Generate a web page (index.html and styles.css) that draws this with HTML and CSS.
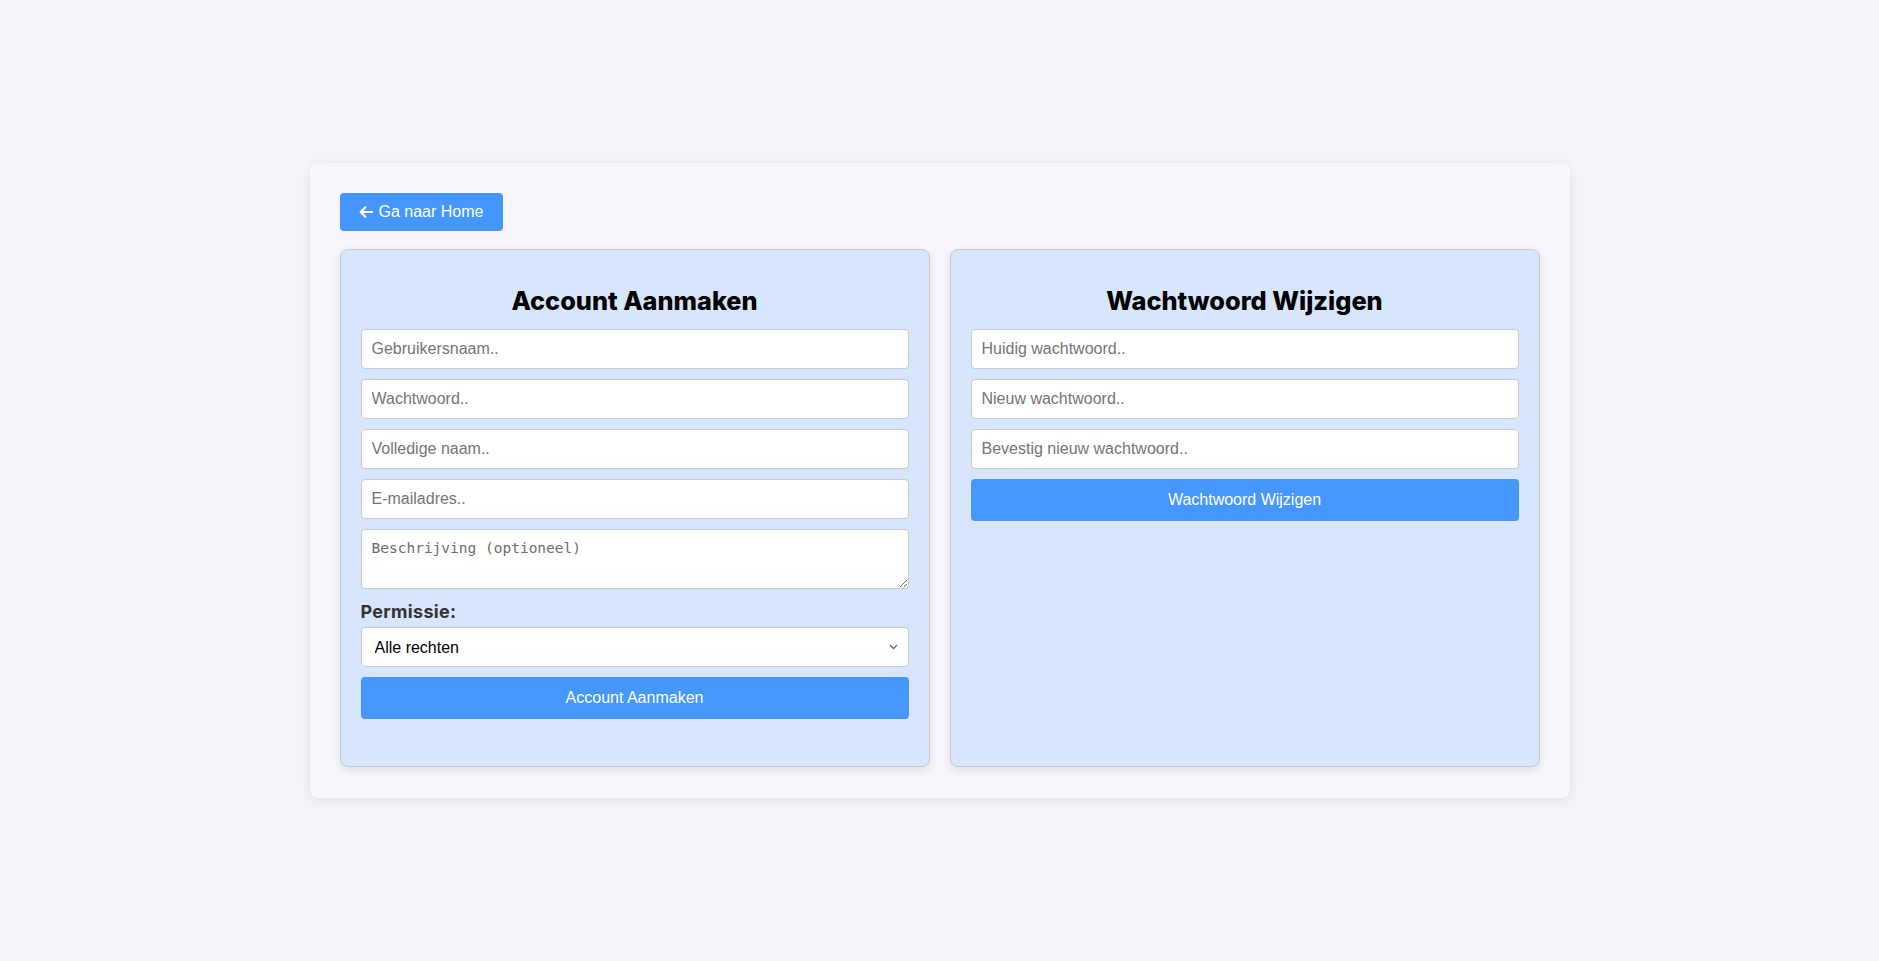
FILE: index.html
```html
<!DOCTYPE html>
<html lang="nl">
<head>
<meta charset="utf-8">
<title>Accountbeheer</title>
<link rel="stylesheet" href="styles.css">
</head>
<body>
<div class="container">
  <div class="top">
    <a class="home-btn" href="#">
      <svg class="arrow" width="14" height="12" viewBox="0 0 14 12" aria-hidden="true"><path d="M13.2 6H1.6M6.4 1.2L1.6 6l4.8 4.8" fill="none" stroke="#fff" stroke-width="2" stroke-linecap="round" stroke-linejoin="round"/></svg>
      <span>Ga naar Home</span>
    </a>
  </div>
  <div class="grid">
    <div class="card card-left">
      <h2>Account Aanmaken</h2>
      <form class="form">
        <input class="field" type="text" placeholder="Gebruikersnaam..">
        <input class="field" type="password" placeholder="Wachtwoord..">
        <input class="field" type="text" placeholder="Volledige naam..">
        <input class="field" type="email" placeholder="E-mailadres..">
        <textarea class="area" placeholder="Beschrijving (optioneel)"></textarea>
        <label class="label">Permissie:</label>
        <div class="select-wrap">
          <select class="select">
            <option>Alle rechten</option>
          </select>
          <svg class="chev" width="9" height="6" viewBox="0 0 9 6" aria-hidden="true"><path d="M1 1l3.5 3.5L8 1" fill="none" stroke="#6b6b6b" stroke-width="1.4"/></svg>
        </div>
        <button class="submit" type="button">Account Aanmaken</button>
      </form>
    </div>
    <div class="card">
      <h2>Wachtwoord Wijzigen</h2>
      <form class="form">
        <input class="field" type="password" placeholder="Huidig wachtwoord..">
        <input class="field" type="password" placeholder="Nieuw wachtwoord..">
        <input class="field" type="password" placeholder="Bevestig nieuw wachtwoord..">
        <button class="submit" type="button">Wachtwoord Wijzigen</button>
      </form>
    </div>
  </div>
</div>
</body>
</html>
```
FILE: styles.css
```css
* { box-sizing: border-box; }
html, body { margin: 0; padding: 0; }
body {
  background: #f3f3f8;
  font-family: "Liberation Sans", Arial, sans-serif;
  min-height: 100vh;
  display: flex;
  align-items: center;
  justify-content: center;
}
.container {
  width: 1260px;
  background: #f8f6fd;
  border-radius: 8px;
  padding: 30px 30px 31px;
  box-shadow: 0 2px 10px rgba(0,0,0,0.08);
}
.top {
  display: flex;
  margin-bottom: 18px;
}
.home-btn {
  display: flex;
  align-items: center;
  gap: 6px;
  height: 38px;
  padding: 0 20px 0 19px;
  background: #4597fe;
  color: #fff;
  border-radius: 4px;
  text-decoration: none;
  font-size: 16px;
}
.grid {
  display: grid;
  grid-template-columns: 1fr 1fr;
  gap: 20px;
}
.card {
  background: #d7e6fd;
  border: 1px solid #c6c9cf;
  border-radius: 8px;
  padding: 20px 20px 47px;
  box-shadow: 0 3px 8px rgba(0,0,0,0.10);
}
.card h2 {
  margin: 16px 0 13px;
  text-align: center;
  font-family: "Inter", "Noto Sans", sans-serif;
  font-weight: 800;
  font-size: 25.3px;
  line-height: 30px;
  color: #000;
}
.form { display: flex; flex-direction: column; }
.field, .area, .select {
  width: 100%;
  border: 1px solid #c9c9cc;
  border-radius: 4px;
  background: #fff;
  margin: 0 0 10px;
}
.field {
  height: 40px;
  padding: 0 10px;
  font-family: "Liberation Sans", Arial, sans-serif;
  font-size: 16px;
  color: #222;
}
.field::placeholder { color: #757575; }
.area {
  height: 60px;
  padding: 10px 10px;
  font-family: "DejaVu Sans Mono", "Liberation Mono", monospace;
  font-size: 14.5px;
  resize: vertical;
  margin-bottom: 11px;
}
.area::placeholder { color: #6e6e6e; }
.label {
  display: block;
  font-family: "Inter", "Noto Sans", sans-serif;
  font-weight: 700;
  font-size: 18px;
  line-height: 24px;
  letter-spacing: 0.3px;
  color: #333;
  margin-bottom: 3px;
}
.select-wrap {
  position: relative;
  margin-bottom: 10px;
}
.select {
  display: block;
  appearance: none;
  -webkit-appearance: none;
  height: 40px;
  margin: 0;
  padding: 0 13px;
  font-family: "Liberation Sans", Arial, sans-serif;
  font-size: 16px;
  color: #000;
}
.chev {
  position: absolute;
  right: 11px;
  top: 17px;
  pointer-events: none;
}
.submit {
  height: 42px;
  border: none;
  border-radius: 4px;
  background: #4597fe;
  color: #fff;
  font-family: "Liberation Sans", Arial, sans-serif;
  font-size: 16px;
  cursor: pointer;
}
```
